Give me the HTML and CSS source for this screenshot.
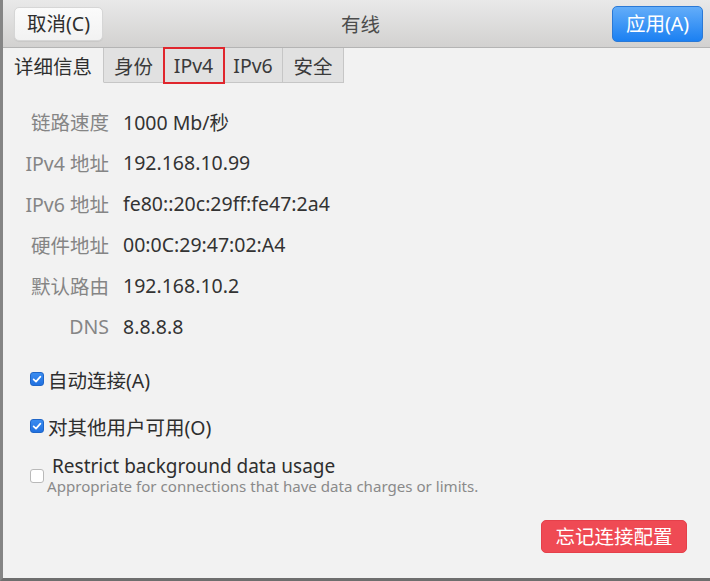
FILE: index.html
```html
<!DOCTYPE html>
<html lang="zh-CN">
<head>
<meta charset="utf-8">
<title>有线</title>
<link rel="stylesheet" href="styles.css">
</head>
<body>
<div class="window">
  <header class="headerbar">
    <button class="btn btn-cancel">取消(C)</button>
    <div class="title">有线</div>
    <button class="btn btn-apply">应用(A)</button>
  </header>
  <nav class="tabs">
    <div class="tab tab-active">详细信息</div>
    <div class="tab">身份</div>
    <div class="tab tab-marked">IPv4</div>
    <div class="tab">IPv6</div>
    <div class="tab">安全</div>
  </nav>
  <main class="content">
    <div class="details">
      <div class="label">链路速度</div><div class="value">1000 Mb/秒</div>
      <div class="label">IPv4 地址</div><div class="value">192.168.10.99</div>
      <div class="label">IPv6 地址</div><div class="value">fe80::20c:29ff:fe47:2a4</div>
      <div class="label">硬件地址</div><div class="value">00:0C:29:47:02:A4</div>
      <div class="label">默认路由</div><div class="value">192.168.10.2</div>
      <div class="label">DNS</div><div class="value">8.8.8.8</div>
    </div>
    <div class="checks">
      <label class="check check-first">
        <span class="box box-on"><svg viewBox="0 0 14 14" width="14" height="14"><path d="M3.6 7.4 L6 9.6 L10.4 4.6" fill="none" stroke="#fff" stroke-width="1.7" stroke-linecap="round" stroke-linejoin="round"/></svg></span>
        <span class="check-text">自动连接(A)</span>
      </label>
      <label class="check check-second">
        <span class="box box-on"><svg viewBox="0 0 14 14" width="14" height="14"><path d="M3.6 7.4 L6 9.6 L10.4 4.6" fill="none" stroke="#fff" stroke-width="1.7" stroke-linecap="round" stroke-linejoin="round"/></svg></span>
        <span class="check-text">对其他用户可用(O)</span>
      </label>
      <label class="check check-third">
        <span class="box box-off"></span>
        <span class="check-block">
          <span class="check-title">Restrict background data usage</span>
          <span class="check-sub">Appropriate for connections that have data charges or limits.</span>
        </span>
      </label>
    </div>
    <div class="actions">
      <button class="btn btn-forget">忘记连接配置</button>
    </div>
  </main>
</div>
</body>
</html>
```

FILE: styles.css
```css
* { box-sizing: border-box; }
html, body {
  margin: 0;
  padding: 0;
  background: #f2f2f2;
}
body {
  font-family: "Noto Sans", "Noto Sans CJK SC", sans-serif;
  color: #333;
}
.window {
  width: 710px;
  height: 581px;
  border-left: 3px solid #858585;
  border-bottom: 3px solid #6e6e6e;
  background: #f2f2f2;
  display: flex;
  flex-direction: column;
  overflow: hidden;
}
.headerbar {
  height: 48px;
  flex: none;
  display: grid;
  grid-template-columns: 1fr auto 1fr;
  align-items: center;
  padding: 0 7px 0 11px;
  background: linear-gradient(#e9e9e9, #d2d1d0);
  border-bottom: 1px solid #b4b4b4;
}
.btn {
  font-family: "Noto Sans", "Noto Sans CJK SC", sans-serif;
  font-size: 19.5px;
  line-height: 1;
  border-radius: 5px;
  cursor: default;
  padding: 0;
  white-space: nowrap;
}
.btn-cancel {
  justify-self: start;
  width: 89px;
  height: 34px;
  background: linear-gradient(#fbfbfb, #f2f2f2);
  border: 1px solid #d6d6d6;
  color: #2e2e2e;
  box-shadow: 0 1px 1px rgba(0,0,0,0.06);
}
.title {
  font-size: 19.5px;
  color: #4c4c4c;
  padding-left: 4px;
}
.btn-apply {
  justify-self: end;
  width: 91px;
  height: 36px;
  background: linear-gradient(#63adf9, #1b80f2);
  border: 1px solid #2a79d6;
  color: #fff;
}
.tabs {
  display: flex;
  height: 35px;
  flex: none;
}
.tab {
  height: 35px;
  display: flex;
  align-items: center;
  justify-content: center;
  font-size: 19.5px;
  white-space: nowrap;
  color: #3a3a3a;
  background: #e1e1e1;
  border-right: 1px solid #c6c6c6;
  border-bottom: 1px solid #c6c6c6;
  padding: 0;
}
.tab:nth-child(1) { width: 101px; }
.tab:nth-child(2) { width: 60px; }
.tab:nth-child(3) { width: 60px; }
.tab:nth-child(4) { width: 59px; }
.tab:nth-child(5) { width: 61px; }
.tab-active {
  background: #f2f2f2;
  border-bottom-color: transparent;
  color: #2e2e2e;
}
.tab-marked {
  outline: 2px solid #e0262d;
  outline-offset: -1px;
  position: relative;
}
.content {
  flex: 1;
  display: flex;
  flex-direction: column;
  padding: 18px 0 0 0;
}
.details {
  display: grid;
  grid-template-columns: 86px auto;
  grid-auto-rows: 41px;
  column-gap: 14px;
  align-items: center;
  padding-left: 20px;
  font-size: 19.5px;
}
.label {
  text-align: right;
  color: #858585;
  white-space: nowrap;
}
.value {
  color: #333;
  white-space: nowrap;
}
.checks {
  display: flex;
  flex-direction: column;
  padding-left: 27px;
  margin-top: 18px;
}
.check {
  display: flex;
  align-items: center;
  gap: 4px;
  font-size: 19.5px;
  color: #2e2e2e;
}
.check-first, .check-second { height: 28px; }
.check-second { margin-top: 19px; }
.check-third {
  margin-top: 16px;
  gap: 3px;
}
.box {
  width: 14px;
  height: 14px;
  border-radius: 3px;
  flex: none;
  display: flex;
}
.box-on {
  background: linear-gradient(#3a8cf0, #2171e0);
  border: 1px solid #1f66c8;
}
.box-on svg { margin: -1px; }
.box-off {
  background: #fff;
  border: 1px solid #b9b9b9;
}
.check-block {
  display: flex;
  flex-direction: column;
}
.check-title {
  margin-left: 5px;
  font-size: 19px;
  line-height: 21px;
  color: #2e2e2e;
}
.check-sub {
  font-size: 15.1px;
  line-height: 19px;
  color: #8a8a8a;
}
.actions {
  display: flex;
  justify-content: flex-end;
  padding-right: 23px;
  margin-top: 24px;
}
.btn-forget {
  width: 146px;
  height: 33px;
  background: #ef4a54;
  border: 1px solid #e5404a;
  color: #fff;
}
```
